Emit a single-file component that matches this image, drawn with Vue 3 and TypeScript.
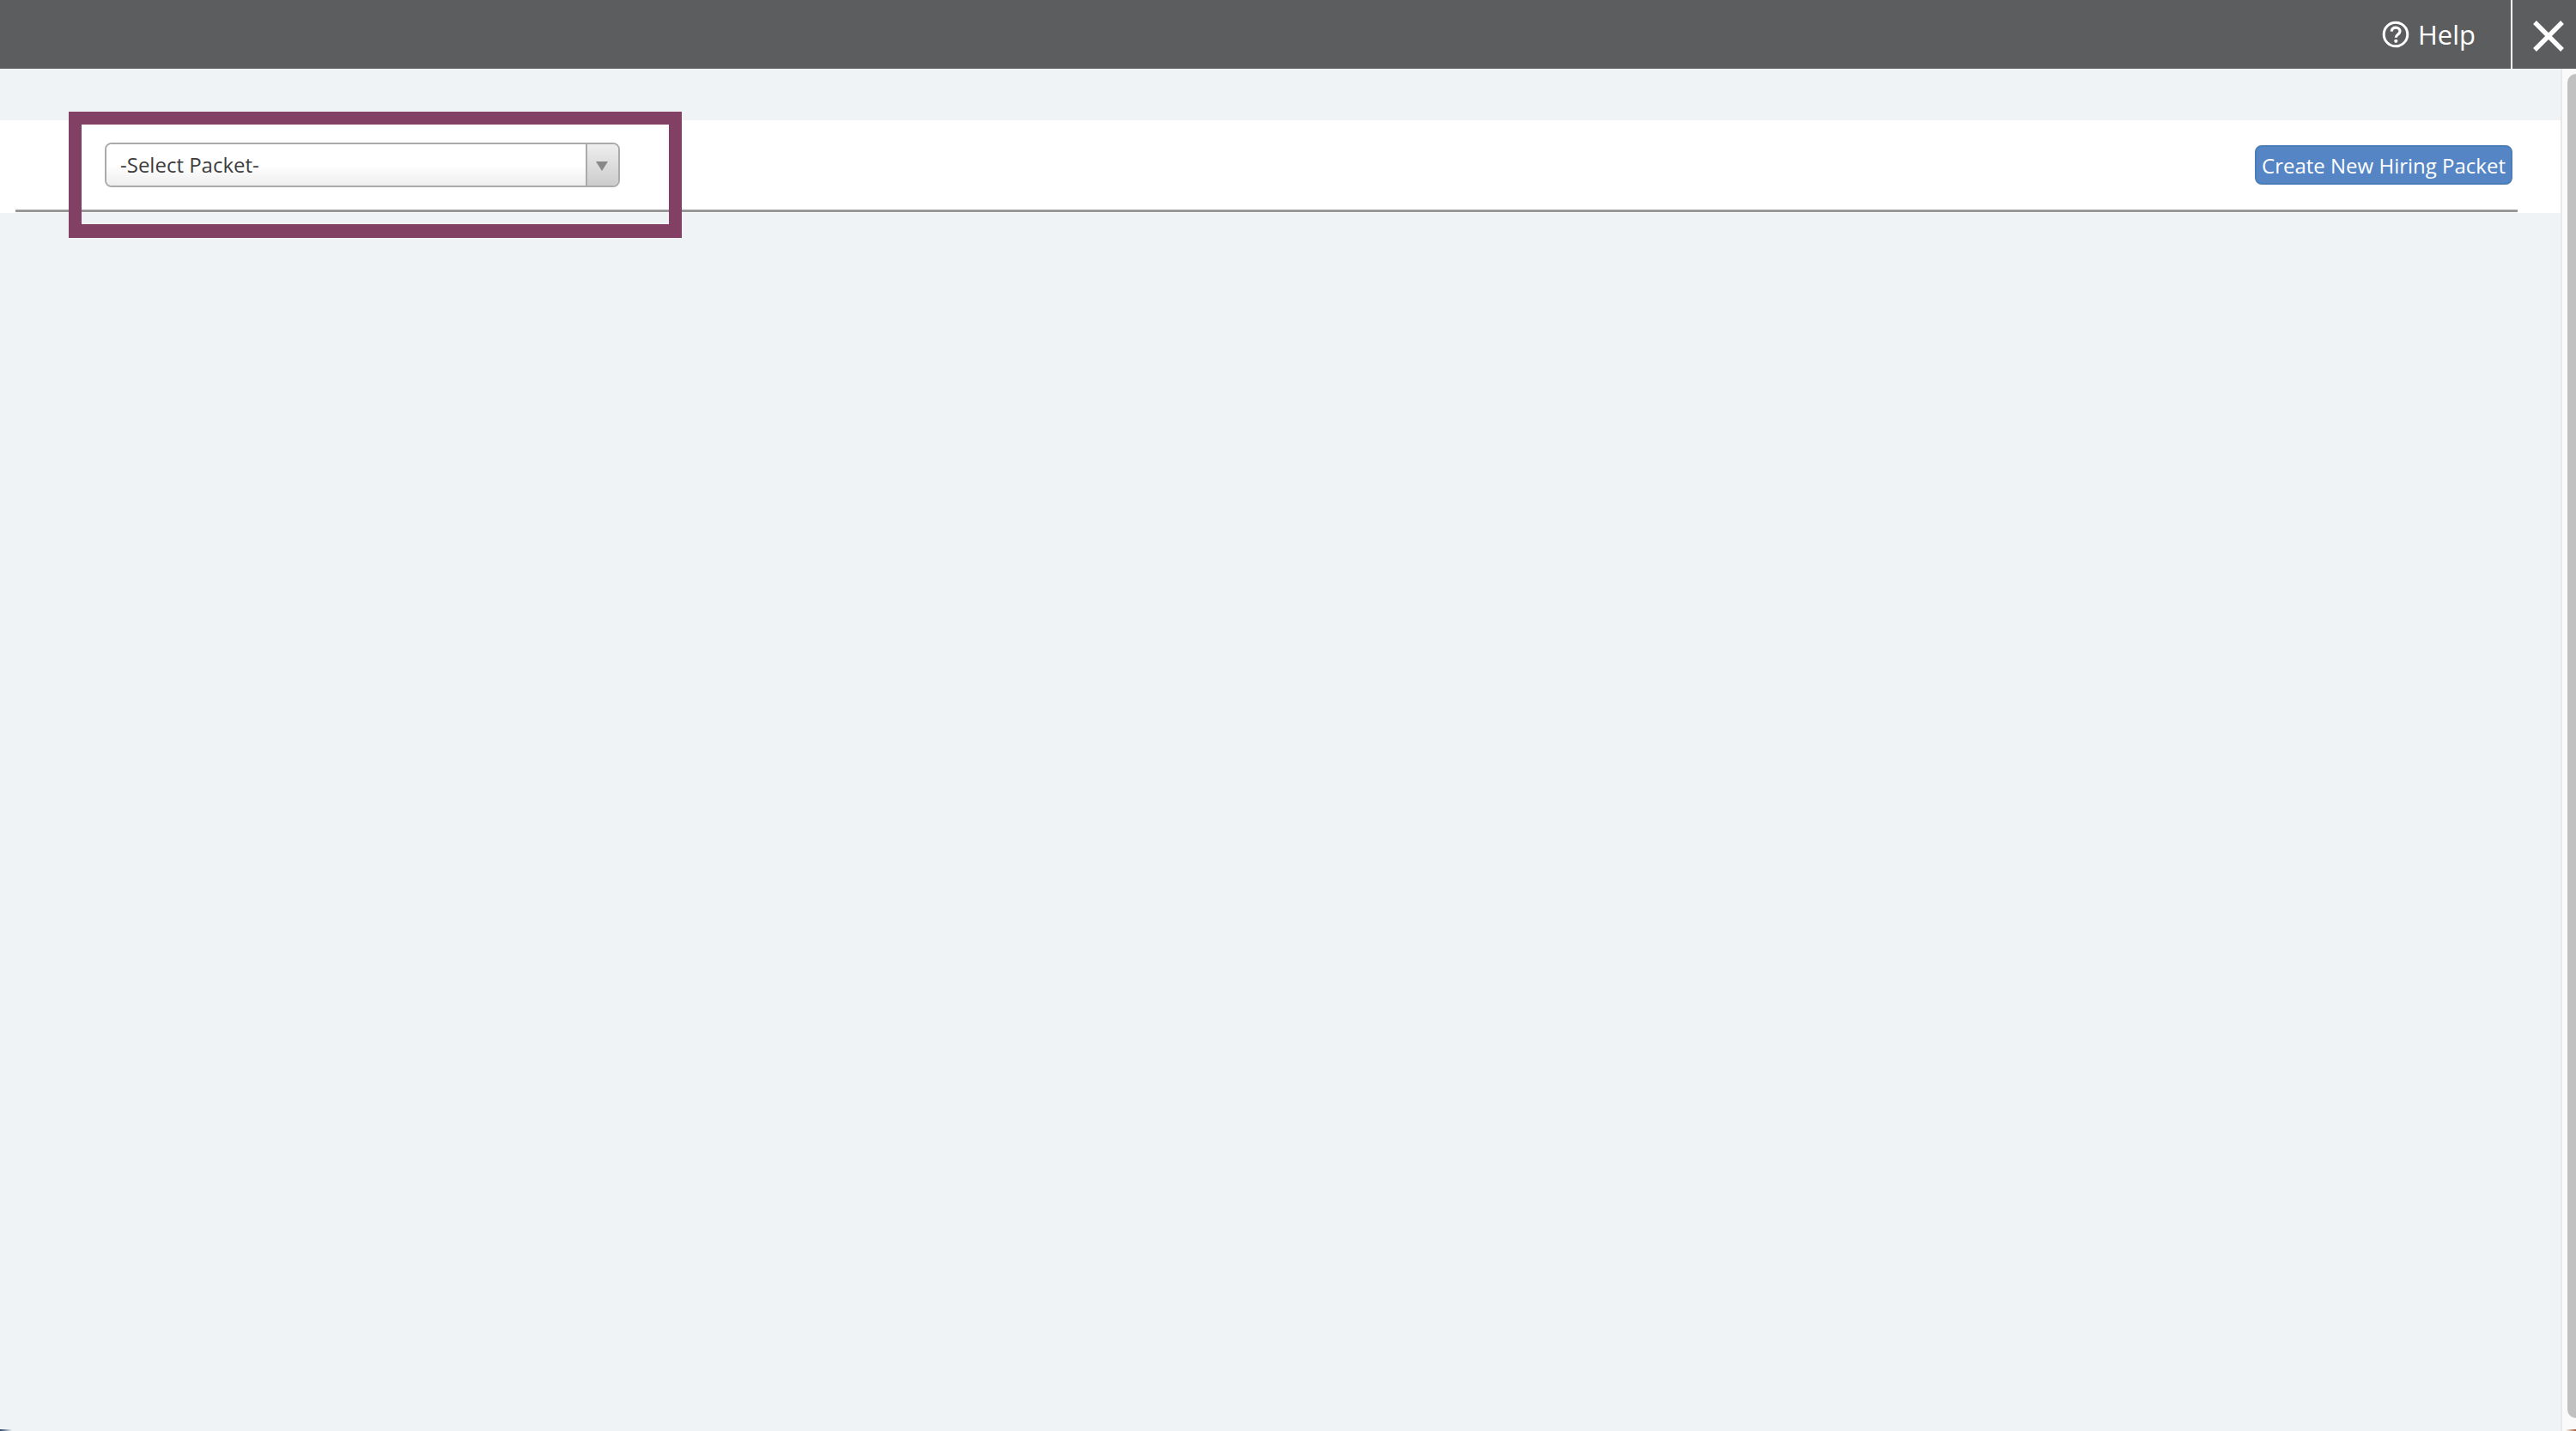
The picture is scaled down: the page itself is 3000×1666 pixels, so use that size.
<script setup lang="ts">
const title: string = 'Create New Hiring Packet'
</script>

<template>
  <div class="page">
    <header class="topbar">
      <div class="help">
        <svg class="help-icon" viewBox="0 0 32 32" aria-hidden="true">
          <circle cx="16" cy="16" r="13.8" fill="none" stroke="#fff" stroke-width="3" />
          <path d="M11.2 12.6c.3-2.8 2.3-4.4 5-4.4 2.8 0 4.8 1.7 4.8 4.1 0 1.9-1 2.9-2.5 3.9-1.4 1-2.2 1.7-2.2 3.5" fill="none" stroke="#fff" stroke-width="3.2" />
          <circle cx="16.3" cy="23.8" r="2.1" fill="#fff" />
        </svg>
        <span>Help</span>
      </div>
      <div class="close">
        <svg viewBox="0 0 36 36" class="close-icon" aria-hidden="true">
          <path d="M2 2 34 34M34 2 2 34" fill="none" stroke="#fff" stroke-width="5.4" />
        </svg>
      </div>
    </header>
    <div class="body">
      <main class="content">
        <section class="panel">
          <div class="panel-row">
            <div class="select">
              <div class="select-value">-Select Packet-</div>
              <div class="select-arrow"><i class="triangle"></i></div>
            </div>
            <button class="primary" type="button"><span class="primary-label">{{ title }}</span></button>
          </div>
        </section>
        <div class="highlight"></div>
        <div class="edge-left"></div>
      </main>
      <aside class="scrollbar">
        <div class="thumb"></div>
        <div class="edge-right"></div>
      </aside>
    </div>
  </div>
</template>

<style scoped>
.page {
  width: 3000px;
  height: 1666px;
  display: flex;
  flex-direction: column;
  overflow: hidden;
  background: #eff3f6;
  font-family: "Open Sans", "Noto Sans", sans-serif;
}
.topbar {
  height: 80px;
  flex: none;
  display: flex;
  justify-content: flex-end;
  align-items: stretch;
  background: #5c5d5f;
  color: #fff;
}
.help {
  display: flex;
  align-items: center;
  gap: 10px;
  margin-right: 41px;
  font-size: 31px;
  font-weight: 400;
}
.help-icon {
  width: 32px;
  height: 32px;
  margin-top: -1px;
}
.close {
  width: 74px;
  border-left: 2px solid #fff;
  display: flex;
  align-items: center;
  justify-content: center;
}
.close-icon {
  width: 36px;
  height: 36px;
  margin-left: 9px;
  margin-top: 4px;
}
.body {
  flex: 1;
  display: flex;
  min-height: 0;
}
.content {
  flex: 1;
  position: relative;
  padding-top: 60px;
}
.panel {
  height: 108px;
  background: #fff;
  padding-left: 18px;
  padding-right: 50px;
}
.panel-row {
  height: 107px;
  box-sizing: border-box;
  border-bottom: 3px solid #999;
  padding-left: 104px;
  padding-right: 6px;
  display: flex;
  align-items: center;
  justify-content: space-between;
}
.select {
  width: 600px;
  height: 52px;
  box-sizing: border-box;
  display: flex;
  border: 2px solid #aaa;
  border-radius: 8px;
  overflow: hidden;
}
.select-value {
  flex: 1;
  padding-left: 16px;
  font-size: 24px;
  line-height: 48px;
  color: #3d3d3d;
  background: linear-gradient(#fff 50%, #eee);
}
.select-arrow {
  width: 38px;
  box-sizing: border-box;
  border-left: 2px solid #aaa;
  padding-right: 2px;
  display: flex;
  align-items: center;
  justify-content: center;
  background: linear-gradient(#eee, #ccc);
}
.triangle {
  width: 0;
  height: 0;
  margin-top: 2px;
  border-left: 7px solid transparent;
  border-right: 7px solid transparent;
  border-top: 11px solid #888;
}
.primary {
  width: 300px;
  height: 46px;
  box-sizing: border-box;
  padding: 0;
  border: 2px solid #4d7db9;
  border-radius: 8px;
  background: #5585c4;
  color: #fff;
  font-family: inherit;
  font-size: 24px;
  line-height: 40px;
  white-space: nowrap;
}
.primary-label {
  display: block;
  padding-top: 2px;
}
.highlight {
  position: absolute;
  left: 80px;
  top: 50px;
  width: 714px;
  height: 147px;
  box-sizing: border-box;
  border: 15px solid #834065;
  border-bottom-width: 16px;
  pointer-events: none;
}
.edge-left {
  position: absolute;
  left: 0;
  bottom: 0;
  width: 14px;
  height: 2px;
  background: linear-gradient(90deg, #2f4668, #eff3f6);
}
.scrollbar {
  width: 18px;
  flex: none;
  position: relative;
  box-sizing: border-box;
  border-left: 2px solid #e8e8e8;
  padding: 6px 0 15px 6px;
  background: #fafafa;
}
.thumb {
  height: 100%;
  background: #c1c1c1;
  border-radius: 10px 0 0 10px;
}
.edge-right {
  position: absolute;
  right: 0;
  bottom: 0;
  width: 12px;
  height: 2px;
  background: linear-gradient(90deg, #fafafa, #a5603c);
}
</style>
